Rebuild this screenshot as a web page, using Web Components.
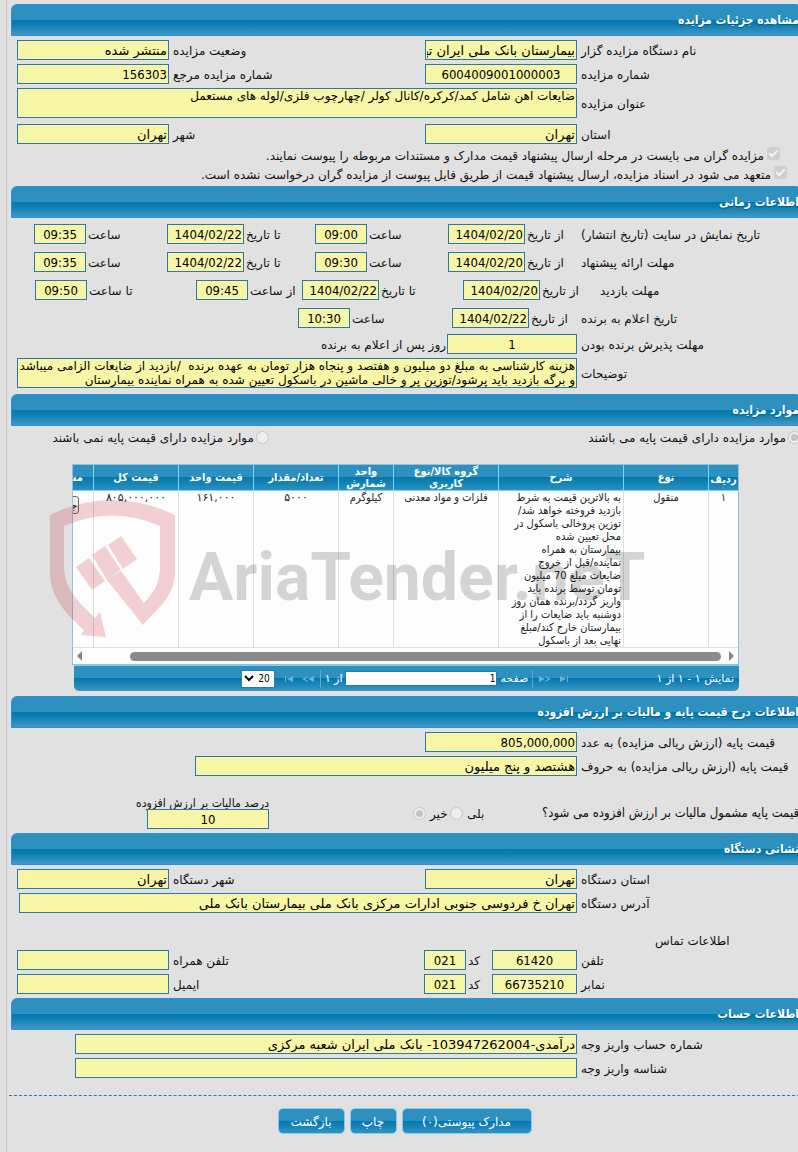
<!DOCTYPE html>
<html lang="fa" dir="rtl">
<head>
<meta charset="utf-8">
<meta name="viewport" content="width=device-width, initial-scale=1">
<title>مشاهده جزئیات مزایده</title>
<style>
  html { background: #e1e1e1; overflow-x: hidden; }

  body {
    --narrow: "DejaVu Sans Condensed", "DejaVu Sans", sans-serif;
    --wide: "DejaVu Sans", sans-serif;
    margin: 0;
    font-family: var(--wide);
    font-size: 12px;
    line-height: 16px;
    color: #111;
  }
</style>
</head>
<body>

<auction-page>
  <form-section heading="مشاهده جزئیات مزایده">
    <form-row cols="373 408">
      <form-field lead label="نام دستگاه مزایده گزار" value="بیمارستان بانک ملی ایران تهران"></form-field>
      <form-field label="وضعیت مزایده" value="منتشر شده" width="152"></form-field>
    </form-row>
    <form-row cols="373 408">
      <form-field lead label="شماره مزایده" value="6004009001000003" center></form-field>
      <form-field label="شماره مزایده مرجع" value="156303" width="152"></form-field>
    </form-row>
    <form-row cols="1">
      <form-field lead multiline label="عنوان مزایده" value="ضایعات اهن شامل کمد/کرکره/کانال کولر /چهارچوب فلزی/لوله های مستعمل"></form-field>
    </form-row>
    <form-row cols="373 408" space="6">
      <form-field lead label="استان" value="تهران"></form-field>
      <form-field label="شهر" value="تهران" width="152"></form-field>
    </form-row>
    <choice-item type="checkbox" checked style="--indent: 18px; --height: 19px">مزایده گران می بایست در مرحله ارسال پیشنهاد قیمت مدارک و مستندات مربوطه را پیوست نمایند.</choice-item>
    <choice-item type="checkbox" checked style="--indent: 11px; --height: 19px">متعهد می شود در اسناد مزایده، ارسال پیشنهاد قیمت از طریق فایل پیوست از مزایده گران درخواست نشده است.</choice-item>
  </form-section>

  <form-section heading="اطلاعات زمانی">
    <form-row cols="221 129 133 148 133 17" space="6">
      <form-caption>تاریخ نمایش در سایت (تاریخ انتشار)</form-caption>
      <form-field tight label="از تاریخ" value="1404/02/20" width="77"></form-field>
      <form-field tight center label="ساعت" value="09:00" width="52"></form-field>
      <form-field tight label="تا تاریخ" value="1404/02/22" width="77"></form-field>
      <form-field tight center label="ساعت" value="09:35" width="52"></form-field>
    </form-row>
    <form-row cols="221 129 133 148 133 17" space="8">
      <form-caption>مهلت ارائه پیشنهاد</form-caption>
      <form-field tight label="از تاریخ" value="1404/02/20" width="77"></form-field>
      <form-field tight center label="ساعت" value="09:30" width="52"></form-field>
      <form-field tight label="تا تاریخ" value="1404/02/22" width="77"></form-field>
      <form-field tight center label="ساعت" value="09:35" width="52"></form-field>
    </form-row>
    <form-row cols="202 133 161 106 161 18" space="8">
      <form-caption>مهلت بازدید</form-caption>
      <form-field tight label="از تاریخ" value="1404/02/20" width="77"></form-field>
      <form-field tight label="تا تاریخ" value="1404/02/22" width="77"></form-field>
      <form-field tight center label="از ساعت" value="09:45" width="52"></form-field>
      <form-field tight center label="تا ساعت" value="09:50" width="52"></form-field>
    </form-row>
    <form-row cols="221 125 154 281" space="8">
      <form-caption>تاریخ اعلام به برنده</form-caption>
      <form-field tight label="از تاریخ" value="1404/02/22" width="77"></form-field>
      <form-field tight center label="ساعت" value="10:30" width="52"></form-field>
    </form-row>
    <form-row cols="351 130 300" space="6">
      <form-field lead center label="مهلت پذیرش برنده بودن" value="1"></form-field>
      <form-caption>روز پس از اعلام به برنده</form-caption>
    </form-row>
    <form-row cols="1">
      <form-field lead multiline label="توضیحات" value="هزینه کارشناسی به مبلغ دو میلیون و هفتصد و پنجاه هزار تومان به عهده برنده  /بازدید از ضایعات الزامی میباشد&#10;و برگه بازدید باید پرشود/توزین پر و خالی ماشین در باسکول تعیین شده به همراه نماینده بیمارستان"></form-field>
    </form-row>
  </form-section>

  <form-section heading="موارد مزایده" style="--before: 6px">
    <form-row cols="529 252" space="0">
      <choice-item type="radio" name="base" checked style="--indent: -3px">موارد مزایده دارای قیمت پایه می باشند</choice-item>
      <choice-item type="radio" name="base">موارد مزایده دارای قیمت پایه نمی باشند</choice-item>
    </form-row>
    <items-grid></items-grid>
  </form-section>

  <form-section heading="اطلاعات درج قیمت پایه و مالیات بر ارزش افزوده" style="--before: 5px">
    <form-row cols="373 408">
      <form-field lead label="قیمت پایه (ارزش ریالی مزایده) به عدد" value="805,000,000"></form-field>
    </form-row>
    <form-row cols="603 178">
      <form-field lead label="قیمت پایه (ارزش ریالی مزایده) به حروف" value="هشتصد و پنج میلیون"></form-field>
    </form-row>
    <form-row cols="256 92 37 144 252" space="21">
      <form-caption long>قیمت پایه مشمول مالیات بر ارزش افزوده می شود؟</form-caption>
      <choice-item type="radio" name="vat" after>بلی</choice-item>
      <choice-item type="radio" name="vat" after checked>خیر</choice-item>
      <span></span>
      <form-field stacked center label="درصد مالیات بر ارزش افزوده" value="10" width="122"></form-field>
    </form-row>
  </form-section>

  <form-section heading="نشانی دستگاه">
    <form-row cols="373 408">
      <form-field lead label="استان دستگاه" value="تهران"></form-field>
      <form-field label="شهر دستگاه" value="تهران" width="152"></form-field>
    </form-row>
    <form-row cols="779 2">
      <form-field lead label="آدرس دستگاه" value="تهران خ فردوسی جنوبی ادارات مرکزی بانک ملی بیمارستان بانک ملی"></form-field>
    </form-row>
    <form-row cols="147 634" space="17">
      <form-caption>اطلاعات تماس</form-caption>
    </form-row>
    <form-row cols="306 68 407" space="0">
      <form-field lead center label="تلفن" value="61420"></form-field>
      <form-field tight center label="کد" value="021" width="42"></form-field>
      <form-field label="تلفن همراه" value="" width="152"></form-field>
    </form-row>
    <form-row cols="306 68 407">
      <form-field lead center label="نمابر" value="66735210"></form-field>
      <form-field tight center label="کد" value="021" width="42"></form-field>
      <form-field label="ایمیل" value="" width="152"></form-field>
    </form-row>
  </form-section>

  <form-section heading="اطلاعات حساب">
    <form-row cols="723 58">
      <form-field lead label="شماره حساب واریز وجه" value="درآمدی-103947262004- بانک ملی ایران شعبه مرکزی"></form-field>
    </form-row>
    <form-row cols="723 58">
      <form-field lead label="شناسه واریز وجه" value=""></form-field>
    </form-row>
  </form-section>

  <action-bar>
    <action-button style="--width: 130px">مدارک پیوستی(۰)</action-button>
    <action-button style="--width: 47px">چاپ</action-button>
    <action-button style="--width: 67px">بازگشت</action-button>
  </action-bar>
</auction-page>

<script>
const makeTemplate = (html) => {
  const template = document.createElement("template");
  template.innerHTML = html;
  return template;
};

const attach = (el, template) => {
  const root = el.attachShadow({ mode: "open" });
  root.appendChild(template.content.cloneNode(true));
  return root;
};

const pageTemplate = makeTemplate(`
  <style>
    :host {
      display: block;
      box-sizing: border-box;
      min-height: 100vh;
      margin-left: 6px;
      border-left: 1px solid #c8c8c8;
      overflow: hidden;
    }
  </style>
  <slot></slot>
`);

class AuctionPage extends HTMLElement {
  constructor() {
    super();
    attach(this, pageTemplate);
  }
}

const sectionTemplate = makeTemplate(`
  <style>
    :host { display: block; padding-top: var(--before, 4px); }

    h2 {
      box-sizing: border-box;
      height: 32px;
      margin: 0 -2px 0 4px;
      border: 1px solid #2a91de;
      border-radius: 6px 4px 0 0;
      background: linear-gradient(#2e90be 0 50%, #0078af 50%, #0a7eb3 65%, #4299c4);
      color: #fff;
      font: bold 12px/31px var(--narrow);
      white-space: nowrap;
      text-shadow: 0 1px 1px #04597f;
    }

    .content { padding-left: 10px; }
  </style>
  <h2></h2>
  <div class="content"><slot></slot></div>
`);

class FormSection extends HTMLElement {
  constructor() {
    super();
    const root = attach(this, sectionTemplate);
    root.querySelector("h2").textContent = this.getAttribute("heading");
  }
}

const rowTemplate = makeTemplate(`
  <style>
    :host { display: grid; align-items: center; min-height: 20px; margin-top: 4px; }
    ::slotted(*) { min-width: 0; }
  </style>
  <slot></slot>
`);

// cols holds the relative column widths, from the right
class FormRow extends HTMLElement {
  constructor() {
    super();
    attach(this, rowTemplate);
    const cols = this.getAttribute("cols").split(" ");
    this.style.gridTemplateColumns = cols.map((c) => `minmax(0, ${c}fr)`).join(" ");
    if (this.hasAttribute("space")) {
      this.style.marginTop = `${this.getAttribute("space")}px`;
    }
  }
}

const captionTemplate = makeTemplate(`
  <style>
    :host {
      display: flex;
      justify-content: flex-end;
      padding-left: 4px;
      padding-top: 2px;
      white-space: nowrap;
    }

    :host([long]) { padding: 0; font-family: var(--narrow); font-size: 13px; }
  </style>
  <slot></slot>
`);

class FormCaption extends HTMLElement {
  constructor() {
    super();
    attach(this, captionTemplate);
  }
}

const fieldTemplate = makeTemplate(`
  <style>
    :host { display: flex; justify-content: flex-end; align-items: center; }

    label {
      box-sizing: border-box;
      padding-left: 4px;
      padding-top: 2px;
      white-space: nowrap;
    }

    :host([tight]) label { padding-left: 2px; }

    :host([lead]) label {
      flex: 0 0 221px;
      display: flex;
      justify-content: flex-end;
    }

    :host([lead]) .box { flex: 1; width: 0; }

    :host([stacked]) { flex-direction: column; align-items: flex-start; }
    :host([stacked]) label { padding: 0; height: 12px; line-height: 12px; font-family: var(--narrow); }

    .box {
      box-sizing: border-box;
      height: 20px;
      margin: 0;
      padding: 0 1px;
      border: 1px solid #2a7aa8;
      border-radius: 0;
      outline: 0;
      background: #f7f5a6;
      color: #000;
      font: 13px/18px var(--narrow);
    }

    .box.text { font-family: var(--wide); }

    :host([center]) .box { text-align: center; }

    textarea.box {
      display: block;
      height: 30px;
      line-height: 14px;
      font-size: 12px;
      resize: none;
      overflow: hidden;
      white-space: pre;
    }
  </style>
  <label for="box"></label>
`);

class FormField extends HTMLElement {
  constructor() {
    super();
    const root = attach(this, fieldTemplate);
    root.querySelector("label").textContent = this.getAttribute("label");

    const value = this.getAttribute("value");
    const box = document.createElement(this.hasAttribute("multiline") ? "textarea" : "input");
    box.id = "box";
    box.className = "box";
    box.classList.toggle("text", /[\u0600-\u06ff]/.test(value));
    box.readOnly = true;
    box.value = value;
    if (this.hasAttribute("width")) {
      box.style.width = `${this.getAttribute("width")}px`;
    }
    root.appendChild(box);
  }
}

const choiceTemplate = makeTemplate(`
  <style>
    :host {
      display: flex;
      align-items: center;
      height: var(--height, 22px);
      padding-right: var(--indent, 0);
      margin-right: min(0px, var(--indent, 0px));
      white-space: nowrap;
    }

    :host([after]) { flex-direction: row-reverse; justify-content: flex-start; }

    input {
      appearance: none;
      flex: none;
      display: grid;
      place-items: center;
      width: 13px;
      height: 13px;
      margin: 0;
      margin-left: 2px;
    }

    :host([after]) input { margin: 0 4px 0 0; }

    input[type="radio"] { border: 1px solid #c6c6c6; border-radius: 50%; background: #eee; box-sizing: border-box; }
    input[type="radio"]:checked::after { content: ""; width: 7px; height: 7px; border-radius: 50%; background: #c4c4c4; }

    input[type="checkbox"] { border-radius: 2px; background: #cfcfcf; }
    input[type="checkbox"]:checked::after {
      content: "";
      width: 3px;
      height: 7px;
      margin-bottom: 2px;
      border: solid #f4f4f4;
      border-width: 0 2px 2px 0;
      transform: rotate(45deg);
    }

    label { padding-top: 2px; }
    :host([type="checkbox"]) label { padding-top: 4px; padding-right: 1px; }
  </style>
  <input id="choice" disabled>
  <label for="choice"><slot></slot></label>
`);

class ChoiceItem extends HTMLElement {
  constructor() {
    super();
    const root = attach(this, choiceTemplate);
    const input = root.querySelector("input");
    input.type = this.getAttribute("type");
    input.name = this.getAttribute("name") || "choice";
    input.checked = this.hasAttribute("checked");
  }
}

const gridTemplate = makeTemplate(`
  <style>
    :host {
      display: block;
      position: relative;
      margin: 16px 59px 0 55px;
    }

    .frame { border: 1px solid #8fc1e0; background: #fdfdfd; overflow: hidden; }

    table {
      width: 725px;
      border-collapse: separate;
      border-spacing: 0;
      table-layout: fixed;
      font-family: var(--narrow);
      font-size: 11px;
      line-height: 13px;
    }

    th, td {
      box-sizing: border-box;
      padding: 0 2px;
      border-left: 1px solid #dedede;
      text-align: center;
    }

    th {
      height: 26px;
      border-left-color: #77d5f7;
      border-bottom: 1px solid #77d5f7;
      background: linear-gradient(#2e90be 0 50%, #0078af 50%, #2e90be);
      color: #fff;
      font-size: 11px;
      line-height: 12px;
      overflow: hidden;
    }

    th:first-child { padding: 4px 0 0; }
    td { height: 157px; vertical-align: top; color: #222; border-bottom: 1px solid #dedede; }
    td.description { text-align: right; white-space: nowrap; }
    td.number { font-family: var(--wide); }
    th.clipped { text-align: right; padding: 0 10px 0 0; white-space: nowrap; }
    td.clipped { text-align: right; padding: 5px 14px 0 0; white-space: nowrap; }

    td button {
      height: 18px;
      padding: 0 1px;
      border: 1px solid #6b6b6b;
      border-radius: 3px;
      background: #efefef;
      color: #000;
      font: inherit;
    }

    .scroll { display: flex; align-items: center; gap: 8px; height: 16px; padding: 0 4px; }
    .scroll i { border: solid transparent; border-width: 5px 0 5px 5px; border-left-color: #868686; }
    .scroll i:last-child { border-width: 5px 5px 5px 0; border-right-color: #868686; }
    .thumb { flex: 1; height: 9px; margin-left: 40px; border-radius: 5px; background: #8a8a8a; }

    .pager {
      display: grid;
      grid-template-columns: 1fr auto 1fr;
      align-items: center;
      box-sizing: border-box;
      height: 26px;
      margin-left: 2px;
      padding: 0 5px;
      border-top: 1px solid #77d5f7;
      border-radius: 0 0 5px 5px;
      background: linear-gradient(#2e90be 0 50%, #0078af 50%, #3d97c3);
      color: #fff;
      font-size: 11px;
    }

    .controls { display: flex; align-items: center; gap: 3px; }
    .controls svg { flex: none; width: 12px; height: 8px; margin: 0 2px; fill: #62b3d8; }
    .bar { width: 1px; height: 18px; margin: 0 1px; background: #5aa9d0; }

    input, select {
      box-sizing: border-box;
      margin: 0;
      border: 1px solid #2a7aa8;
      border-radius: 0;
      background: #fff;
      color: #000;
      font: 10px/14px var(--narrow);
    }

    input { width: 152px; height: 15px; padding: 0 1px; }

    .size { display: grid; align-items: center; margin-right: 3px; }
    .size > * { grid-area: 1 / 1; }
    select { appearance: none; width: 34px; height: 18px; padding: 0 4px; direction: rtl; }
    .size svg { width: 10px; height: 7px; margin: 0 0 0 3px; fill: none; stroke: #000; stroke-width: 2; justify-self: end; pointer-events: none; }

    .watermark {
      position: absolute;
      left: -23px;
      top: 34px;
      width: 604px;
      height: 142px;
      pointer-events: none;
    }
  </style>
  <div class="frame">
    <table>
      <colgroup>
        <col style="width: 30px"><col style="width: 85px"><col style="width: 125px">
        <col style="width: 105px"><col style="width: 55px"><col style="width: 85px">
        <col style="width: 75px"><col style="width: 85px"><col style="width: 80px">
      </colgroup>
      <thead>
        <tr>
          <th>ردیف</th><th>نوع</th><th>شرح</th><th>گروه کالا/نوع کاربری</th><th>واحد شمارش</th>
          <th>تعداد/مقدار</th><th>قیمت واحد</th><th>قیمت کل</th><th class="clipped">مشاهده</th>
        </tr>
      </thead>
      <tbody>
        <tr>
          <td>۱</td>
          <td>منقول</td>
          <td class="description">به بالاترین قیمت به شرط<br>بازدید فروخته خواهد شد/<br>توزین پروخالی باسکول در<br>محل تعیین شده<br>بیمارستان به همراه<br>نماینده/قبل از خروج<br>ضایعات مبلغ 70 میلیون<br>تومان توسط برنده باید<br>واریز گردد/برنده همان روز<br>دوشنبه باید ضایعات را از<br>بیمارستان خارج کند/مبلغ<br>نهایی بعد از باسکول</td>
          <td>فلزات و مواد معدنی</td>
          <td>کیلوگرم</td>
          <td class="number">۵۰۰۰</td>
          <td class="number">۱۶۱,۰۰۰</td>
          <td class="number">۸۰۵,۰۰۰,۰۰۰</td>
          <td class="clipped"><button type="button">جزئیات</button></td>
        </tr>
      </tbody>
    </table>
    <div class="scroll"><i></i><div class="thumb"></div><i></i></div>
  </div>
  <div class="pager">
    <span>نمایش ۱ - ۱ از ۱</span>
    <div class="controls">
      <svg viewBox="0 0 12 8"><path d="M2 1L8 4L2 7ZM9 1H10V7H9Z"/></svg>
      <svg viewBox="0 0 12 8"><path d="M0 1L6 4L0 7ZM6 1L12 4L6 7V6L9 4L6 2Z"/></svg>
      <div class="bar"></div>
      <label for="page">صفحه</label>
      <input id="page" value="1">
      <span>از ۱</span>
      <div class="bar"></div>
      <svg viewBox="0 0 12 8"><path d="M12 1L6 4L12 7ZM6 1L0 4L6 7V6L3 4L6 2Z"/></svg>
      <svg viewBox="0 0 12 8"><path d="M10 1L4 4L10 7ZM2 1H3V7H2Z"/></svg>
      <div class="size">
        <select aria-label="تعداد در صفحه"><option>20</option></select>
        <svg viewBox="0 0 10 7"><path d="M1 1L5 5L9 1"/></svg>
      </div>
    </div>
  </div>
  <svg class="watermark" viewBox="49 498 604 142" direction="ltr">
    <g fill="#c4182e" fill-opacity=".2">
      <path fill-rule="evenodd" d="M50 515Q112 485 175 515V572C175 596 158 608 143 625L107 580L121 571L144 603C154 592 160 584 160 566V526Q112 505 64 526V566C64 588 78 602 95 618L100 612L106 637L81 635L84 630C66 614 50 597 50 572Z"/>
      <path d="M92 555L105 546L121 570L107 580ZM76 567L89 558L105 581L92 590ZM108 545L121 536L137 559L123 569Z"/>
    </g>
    <text x="189" y="600" font-family="Roboto, Liberation Sans, sans-serif" font-weight="bold" font-size="66" fill="#000" fill-opacity=".16">AriaTender.neT</text>
  </svg>
`);

class ItemsGrid extends HTMLElement {
  constructor() {
    super();
    attach(this, gridTemplate);
  }
}

const actionBarTemplate = makeTemplate(`
  <style>
    :host {
      display: flex;
      justify-content: center;
      gap: 5px;
      margin: 17px -2px 0 2px;
      padding: 12px 0 16px;
      border-top: 1px dashed #2a7aa8;
    }
  </style>
  <slot></slot>
`);

class ActionBar extends HTMLElement {
  constructor() {
    super();
    attach(this, actionBarTemplate);
  }
}

const actionButtonTemplate = makeTemplate(`
  <style>
    :host { display: block; }

    button {
      box-sizing: border-box;
      min-width: var(--width);
      height: 26px;
      padding: 2px 4px 0;
      border: 1px solid #77d0f3;
      border-radius: 5px;
      background: linear-gradient(#2e90be 0 50%, #0078af 50%, #3591c0);
      color: #fff;
      font: inherit;
    }
  </style>
  <button type="button"><slot></slot></button>
`);

class ActionButton extends HTMLElement {
  constructor() {
    super();
    attach(this, actionButtonTemplate);
  }
}

window.customElements.define("auction-page", AuctionPage);
window.customElements.define("form-section", FormSection);
window.customElements.define("form-row", FormRow);
window.customElements.define("form-caption", FormCaption);
window.customElements.define("form-field", FormField);
window.customElements.define("choice-item", ChoiceItem);
window.customElements.define("items-grid", ItemsGrid);
window.customElements.define("action-bar", ActionBar);
window.customElements.define("action-button", ActionButton);
</script>
</body>
</html>
